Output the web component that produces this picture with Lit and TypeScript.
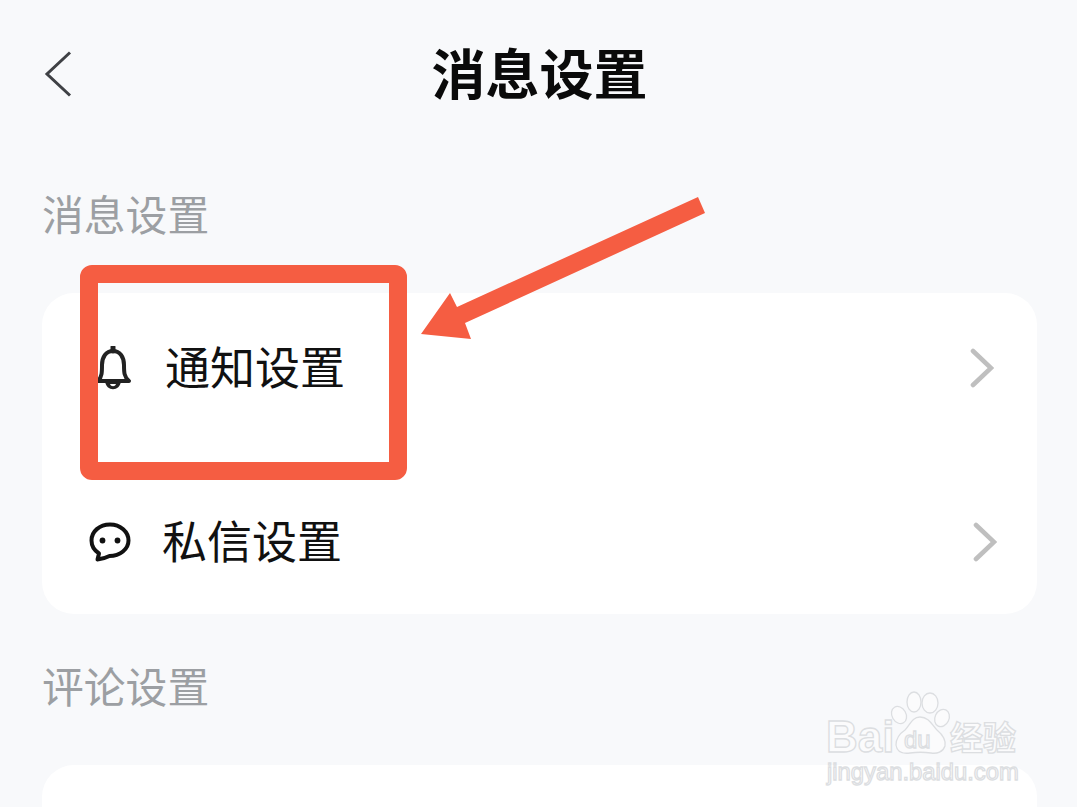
import { LitElement, html, css } from 'lit';
import { customElement } from 'lit/decorators.js';

const chevron = html`<svg class="chevron" viewBox="0 0 24 40" width="24" height="40">
  <path d="M3 3 L21 20 L3 37" fill="none" stroke="#bfbfbf" stroke-width="4.6" stroke-linecap="round" stroke-linejoin="miter"/>
</svg>`;

@customElement('app-root')
export class AppRoot extends LitElement {
  static styles = css`
    :host {
      display: block;
      position: relative;
      height: 807px;
      overflow: hidden;
      background: #f8f9fb;
      font-family: "Noto Sans CJK SC", "Noto Sans", sans-serif;
      color: #111;
    }
    .page {
      padding: 0 40px 0 42px;
    }
    .header {
      height: 148px;
      display: grid;
      grid-template-columns: 1fr auto 1fr;
      align-items: center;
    }
    .back {
      display: block;
      margin-left: 1.5px;
    }
    .title {
      margin: 0 0 4px 0;
      font-size: 54px;
      line-height: 144px;
      font-weight: 700;
      color: #0a0a0a;
    }
    .label {
      margin: 35px 0 0 0;
      height: 60px;
      font-size: 41.8px;
      line-height: 60px;
      font-weight: 400;
      color: #9c9fa3;
    }
    .label.second {
      margin-top: 41px;
    }
    .card {
      margin-top: 50px;
      background: #fff;
      border-radius: 32px;
      padding-top: 3px;
      display: grid;
      gap: 30px;
    }
    .card.empty {
      height: 200px;
    }
    .row {
      height: 144px;
      display: flex;
      align-items: center;
      font-size: 45px;
    }
    .row .name {
      flex: 1;
      line-height: 60px;
      margin-bottom: 5px;
    }
    .row.notice {
      padding: 0 43px 0 52px;
    }
    .row.notice .name {
      margin-left: 33px;
    }
    .row.private {
      padding: 0 40px 0 47px;
    }
    .row.private .name {
      margin-left: 31px;
    }
    .chevron {
      display: block;
    }
    .overlay {
      position: absolute;
      left: 0;
      top: 0;
      pointer-events: none;
    }
    .mark-text {
      font-family: "Liberation Sans", "Noto Sans CJK SC", sans-serif;
      fill: #fbfbfc;
      stroke: #dcdee1;
      stroke-width: 1.3;
    }
  `;

  render() {
    return html`
      <div class="page">
        <div class="header">
          <svg class="back" viewBox="0 0 28 46" width="28" height="46">
            <path d="M26 1.500 L3 23 L26 44.500" fill="none" stroke="#3f4145" stroke-width="3"/>
          </svg>
          <h1 class="title">消息设置</h1>
          <div></div>
        </div>

        <h2 class="label">消息设置</h2>
        <div class="card">
          <div class="row notice">
            <svg viewBox="0 0 38 44" width="38" height="44">
              <path d="M19 1v4" stroke="#222" stroke-width="5" stroke-linecap="round"/>
              <path d="M4 35c4-4 4-9 4-16C8 11 12 5 19 5s11 6 11 14c0 7 0 12 5 16z" fill="none" stroke="#222" stroke-width="4" stroke-linejoin="round"/>
              <path d="M11 35c1 11 15 11 16 0z" fill="#222"/>
              <path d="M16 38c1 3 5 3 6 0z" fill="#fff"/>
            </svg>
            <span class="name">通知设置</span>
            ${chevron}
          </div>
          <div class="row private">
            <svg viewBox="0 0 42 40" width="42" height="40">
              <path d="M21 2.500C10.500 2.500 2.500 9.500 2.500 18.500c0 5.500 3 10 7.500 13l-1.500 6c5-.5 9-2 12-3.500 10.500 0 19-7 19-15.500S31.500 2.500 21 2.500z" fill="none" stroke="#111" stroke-width="4" stroke-linejoin="round"/>
              <circle cx="13.500" cy="18.500" r="2.900" fill="#111"/>
              <circle cx="28.500" cy="18.500" r="2.900" fill="#111"/>
            </svg>
            <span class="name">私信设置</span>
            ${chevron}
          </div>
        </div>

        <h2 class="label second">评论设置</h2>
        <div class="card empty"></div>
      </div>

      <svg class="overlay" width="1077" height="807" viewBox="0 0 1077 807">
        <rect x="89" y="274" width="309" height="197" rx="3" fill="none" stroke="#f55d42" stroke-width="18"/>
        <path d="M698 197 L705 213 L465 323 L471 339 L421 334 L450 293 L457 307 Z" fill="#f55d42"/>

        <g>
          <ellipse cx="914" cy="702" rx="7" ry="10" fill="#fbfbfc" stroke="#dcdee1" stroke-width="1.300"/>
          <ellipse cx="930" cy="703" rx="8" ry="10" fill="#fbfbfc" stroke="#dcdee1" stroke-width="1.300"/>
          <ellipse cx="899" cy="715" rx="7" ry="9" transform="rotate(-30 899 715)" fill="#fbfbfc" stroke="#dcdee1" stroke-width="1.300"/>
          <ellipse cx="942" cy="718" rx="7" ry="9" transform="rotate(25 942 718)" fill="#fbfbfc" stroke="#dcdee1" stroke-width="1.300"/>
          <path d="M920 717c9 0 12 8 17 13 6 5 9 10 8 16-2 6-8 8-14 7-7-1-14-1-21 0-7 1-13-1-14-8 0-6 3-11 9-15 5-5 7-13 15-13z" fill="#fbfbfc" stroke="#dcdee1" stroke-width="1.300"/>
          <text class="mark-text" x="904" y="748" font-size="24">du</text>
          <text class="mark-text" x="826" y="752" font-size="44" font-weight="700">Bai</text>
          <text class="mark-text" x="950" y="750" font-size="33" font-weight="700">经验</text>
          <text class="mark-text" x="827" y="780" font-size="23.800">jingyan.baidu.com</text>
        </g>
      </svg>
    `;
  }
}
